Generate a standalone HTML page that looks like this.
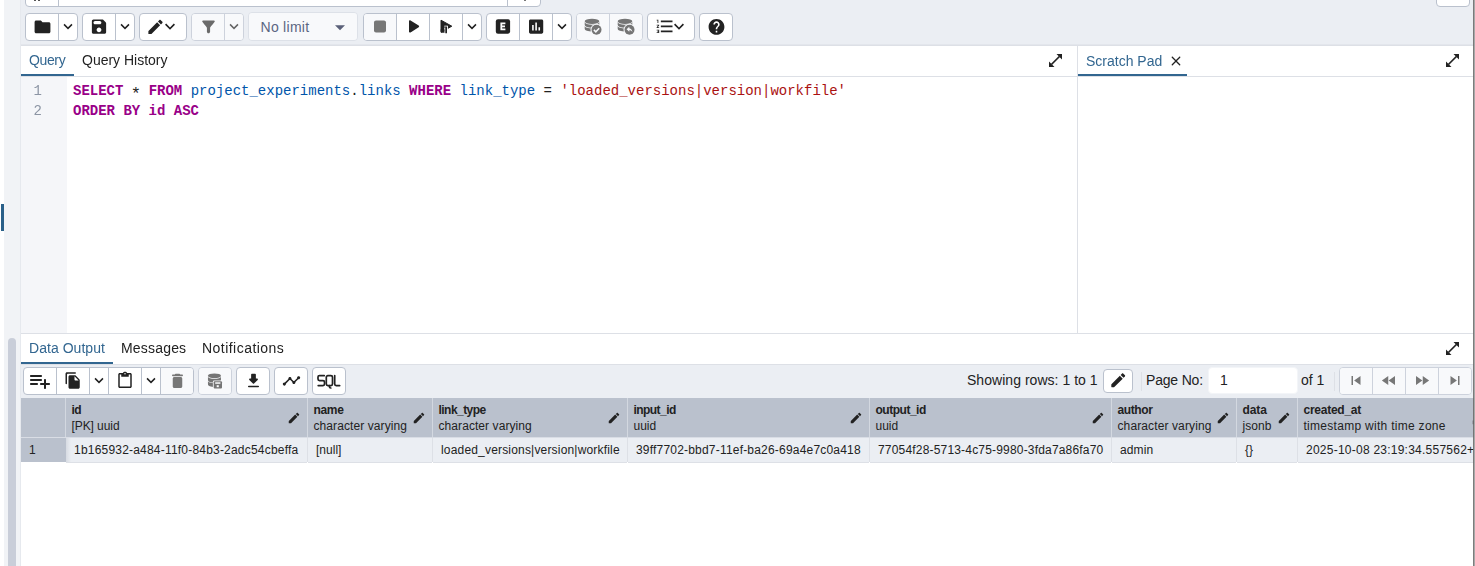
<!DOCTYPE html>
<html><head><meta charset="utf-8">
<style>
*{box-sizing:border-box;margin:0;padding:0}
html,body{width:1475px;height:566px;overflow:hidden;background:#fff;font-family:"Liberation Sans",sans-serif;color:#222}
.abs{position:absolute}
#root{position:relative;width:1475px;height:566px;overflow:hidden;background:#fff}
.t{position:absolute;white-space:nowrap;line-height:1}.g{will-change:transform}
.grp{position:absolute;height:28px;border:1px solid #bac1cd;border-radius:4px;background:#fff;display:flex;overflow:hidden}
.grp>div{min-width:0;height:100%;border-right:1px solid #bac1cd;display:flex;align-items:center;justify-content:center;flex:none}
.grp>div:last-child{border-right:none}
.b{width:33px}.d{width:19px}.grp>div:last-child{flex:1 1 0}.b2{width:100%}
.grp.dis{background:#f8f9fb;border-color:#cdd2dc}.grp.dis>div{border-color:#cdd2dc}
svg{display:block}.grp svg{transform:translateY(-0.600px)}
.code{font-family:"Liberation Mono",monospace;font-size:14px;line-height:20px;white-space:pre;position:absolute;margin-top:1px}
.k{color:#990088;font-weight:bold}.v{color:#0055aa}.s{color:#aa1111}.o{color:#222}
.hc{position:absolute;top:398px;height:39px;background:#bac1cd}
.hn{position:absolute;left:7px;top:5px;font-size:12px;font-weight:bold;white-space:nowrap;line-height:14px}
.ht{position:absolute;left:7px;top:21px;font-size:12px;white-space:nowrap;line-height:14px}
.dc{position:absolute;top:438px;height:25px;background:#ebeef3;font-size:12px;line-height:24px;padding-left:8px;white-space:nowrap;overflow:hidden;border-bottom:1px solid #dde0e6}
#tq{letter-spacing:-0.365px}#tqh{letter-spacing:-0.006px}#tdo{letter-spacing:0.036px}#tms{letter-spacing:0.186px}#tno{letter-spacing:0.464px}#tsr{letter-spacing:0.037px}#tpn{letter-spacing:-0.184px}#tof{letter-spacing:-0.04px}#nolimit{letter-spacing:0.279px}#hn0{letter-spacing:-0.586px}#ht0{letter-spacing:-0.078px}#dv0{letter-spacing:0.203px}#hn1{letter-spacing:-0.34px}#ht1{letter-spacing:0.091px}#dv1{letter-spacing:0.007px}#hn2{letter-spacing:-0.537px}#ht2{letter-spacing:0.074px}#dv2{letter-spacing:0.181px}#hn3{letter-spacing:-0.559px}#ht3{letter-spacing:-0.022px}#dv3{letter-spacing:0.196px}#hn4{letter-spacing:-0.484px}#ht4{letter-spacing:-0.022px}#dv4{letter-spacing:0.182px}#hn5{letter-spacing:-0.391px}#ht5{letter-spacing:0.115px}#dv5{letter-spacing:0.103px}#hn6{letter-spacing:-0.097px}#ht6{letter-spacing:0.062px}#dv6{letter-spacing:0.042px}#hn7{letter-spacing:-0.255px}#ht7{letter-spacing:0.288px}#dv7{letter-spacing:0.242px}</style></head><body><div id="root">
<!-- left strip -->
<div class="abs" style="left:4px;top:0;width:17px;height:566px;background:#f1f3f6"></div>
<div class="abs" style="left:20px;top:0;width:1px;height:566px;background:#e6e9ee"></div>
<div class="abs" style="left:1px;top:204px;width:3px;height:27px;background:#2a6089"></div>
<div class="abs" style="left:8px;top:338px;width:8px;height:240px;border-radius:4px;background:#c9ced9"></div>
<!-- top toolbar bg -->
<div class="abs" style="left:21px;top:0;width:1454px;height:46px;background:#ebeef3;border-bottom:1px solid #dde0e6"></div><div class="abs" style="left:21px;top:44px;width:1454px;height:1px;background:#e3e6ec"></div>
<!-- partial previous row -->
<div class="abs" style="left:25px;top:-22px;width:516px;height:29px;border:1px solid #bac1cd;border-radius:4px;background:#fff"></div>
<div class="abs" style="left:58px;top:0;width:1px;height:6px;background:#bac1cd"></div>
<div class="abs" style="left:507px;top:0;width:1px;height:6px;background:#bac1cd"></div>
<div class="abs" style="left:34px;top:0;width:2px;height:1px;background:#555"></div>
<div class="abs" style="left:38px;top:0;width:2px;height:1px;background:#555"></div>
<div class="abs" style="left:524px;top:0;width:2px;height:1px;background:#777"></div>
<div class="abs" style="left:1436px;top:-22px;width:34px;height:29px;border:1px solid #bac1cd;border-radius:4px;background:#fff"></div>
<!-- TOOLBAR GROUPS -->
<div class="grp" style="left:25px;top:13px;width:53px"><div class="b" style=""><svg width="19" height="19" viewBox="0 0 24 24" style=""><path fill="#222" d="M10.59 4.59C10.21 4.21 9.7 4 9.17 4H4c-1.1 0-1.99.9-1.99 2L2 18c0 1.1.9 2 2 2h16c1.1 0 2-.9 2-2V8c0-1.1-.9-2-2-2h-8l-1.41-1.41z"/></svg></div><div class="d" style=""><svg width="20" height="20" viewBox="0 0 24 24" style=""><path fill="#222" d="M7.41 8.59 12 13.17l4.59-4.58L18 10l-6 6-6-6 1.41-1.41z"/></svg></div></div><div class="grp" style="left:82px;top:13px;width:53px"><div class="b" style=""><svg width="19" height="19" viewBox="0 0 24 24" style="transform:translate(-0.500px,-0.900px)"><path fill="#222" d="M17.59 3.59c-.38-.38-.89-.59-1.42-.59H5c-1.11 0-2 .9-2 2v14c0 1.1.9 2 2 2h14c1.1 0 2-.9 2-2V7.83c0-.53-.21-1.04-.59-1.41l-2.82-2.83zM12 19c-1.66 0-3-1.34-3-3s1.34-3 3-3 3 1.34 3 3-1.34 3-3 3zm1-10H7c-1.1 0-2-.9-2-2s.9-2 2-2h6c1.1 0 2 .9 2 2s-.9 2-2 2z"/></svg></div><div class="d" style=""><svg width="20" height="20" viewBox="0 0 24 24" style=""><path fill="#222" d="M7.41 8.59 12 13.17l4.59-4.58L18 10l-6 6-6-6 1.41-1.41z"/></svg></div></div><div class="grp" style="left:139px;top:13px;width:48px"><div class="b2" style=""><svg width="19" height="19" viewBox="0 0 24 24" style="margin-left:0.400px"><path fill="#222" d="M3 17.46v3.04c0 .28.22.5.5.5h3.04c.13 0 .26-.05.35-.15L17.81 9.94l-3.75-3.75L3.15 17.1c-.1.1-.15.22-.15.36zM20.71 7.04c.39-.39.39-1.02 0-1.41l-2.34-2.34c-.39-.39-1.02-.39-1.41 0l-1.83 1.83 3.75 3.75 1.83-1.83z"/></svg><svg width="20" height="20" viewBox="0 0 24 24" style="margin-left:-4.800px"><path fill="#222" d="M7.41 8.59 12 13.17l4.59-4.58L18 10l-6 6-6-6 1.41-1.41z"/></svg></div></div><div class="grp dis" style="left:191px;top:13px;width:53px"><div class="b" style="background:#f8f9fb"><svg width="19" height="19" viewBox="0 0 24 24" style=""><path fill="#6a6a6a" d="M4.25 5.61C6.57 8.59 10 13 10 13v5c0 1.1.9 2 2 2s2-.9 2-2v-5s3.43-4.41 5.75-7.39c.51-.66.04-1.61-.8-1.61H5.04c-.83 0-1.3.95-.79 1.61z"/></svg></div><div class="d" style="background:#f8f9fb"><svg width="20" height="20" viewBox="0 0 24 24" style=""><path fill="#666" d="M7.41 8.59 12 13.17l4.59-4.58L18 10l-6 6-6-6 1.41-1.41z"/></svg></div></div><div class="grp dis" style="left:248px;top:12px;width:110px;height:29px;border-color:#dde1e8"><div style="width:100%;justify-content:flex-start;background:#f8f9fb"><span id="nolimit" style="font-size:14px;color:#5b6682;margin-left:11.500px;position:relative;top:0px">No limit</span><svg width="24" height="24" viewBox="0 0 24 24" style="margin-left:auto;margin-right:5px;transform:translateY(0.300px)"><path fill="#5b6079" d="M7 10l5 5 5-5z"/></svg></div></div><div class="grp" style="left:363px;top:13px;width:119px"><div class="b" style="background:#f8f9fb"><svg width="24" height="24" viewBox="0 0 24 24" style=""><path fill="#777" d="M8 6h8c1.1 0 2 .9 2 2v8c0 1.1-.9 2-2 2H8c-1.1 0-2-.9-2-2V8c0-1.1.9-2 2-2z"/></svg></div><div class="b" style=""><svg width="24" height="24" viewBox="0 0 24 24" style=""><path fill="#222" d="M8 6.82v10.36c0 .79.87 1.27 1.54.84l8.14-5.18c.62-.39.62-1.29 0-1.69L9.54 5.98C8.87 5.55 8 6.03 8 6.82z"/></svg></div><div class="b" style=""><svg width="20" height="20" viewBox="0 0 20 20"><path fill="#222" stroke="#222" stroke-width="1" stroke-linejoin="round" d="M5 3.800 15.800 9.800 5 15.800z"/><rect x="8.300" y="9.300" width="3.600" height="8" fill="#fff"/><path fill="#222" d="M9.300 10.200h1.700v6.600H9.300z"/><path fill="#222" d="M8.300 10.200h1.200v1.200H8.300z"/><path fill="#222" d="M4.500 13h4v3.300L5 16.400z"/></svg></div><div class="d" style=""><svg width="20" height="20" viewBox="0 0 24 24" style=""><path fill="#222" d="M7.41 8.59 12 13.17l4.59-4.58L18 10l-6 6-6-6 1.41-1.41z"/></svg></div></div><div class="grp" style="left:486px;top:13px;width:86px"><div class="b" style=""><svg width="20" height="20" viewBox="0 0 20 20"><rect x="2.800" y="2.900" width="14.300" height="14.400" rx="2.200" fill="#222"/><path fill="#fff" d="M7.400 6.100h5v1.700H9.200v1.400h2.800v1.600H9.200v1.400h3.200v1.700H7.400z"/></svg></div><div class="b" style=""><svg width="19" height="19" viewBox="0 0 24 24" style="transform:translate(-0.400px,-1px)"><path fill="#222" d="M19 3H5c-1.100 0-2 .9-2 2v14c0 1.100.9 2 2 2h14c1.100 0 2-.9 2-2V5c0-1.100-.9-2-2-2zM9 17H7v-7h2v7zm4 0h-2V7h2v10zm4 0h-2v-4h2v4z"/></svg></div><div class="d" style=""><svg width="20" height="20" viewBox="0 0 24 24" style=""><path fill="#222" d="M7.41 8.59 12 13.17l4.59-4.58L18 10l-6 6-6-6 1.41-1.41z"/></svg></div></div><div class="grp dis" style="left:576px;top:13px;width:67px"><div class="b" style="background:#f8f9fb"><svg width="20" height="20" viewBox="0 0 20 20"><ellipse cx="9.0" cy="4.9" rx="7.3" ry="2.6" fill="#757575"/><path fill="#757575" d="M1.70 5.70A7.3 2.6 0 0 0 16.30 5.70V8.70A7.3 2.6 0 0 1 1.70 8.70z"/><path fill="#757575" d="M1.70 9.50A7.3 2.6 0 0 0 16.30 9.50V12.50A7.3 2.6 0 0 1 1.70 12.50z"/><circle cx="13.500" cy="13.400" r="6" fill="#f8f9fb"/><circle cx="13.500" cy="13.400" r="5" fill="#757575"/><path d="M10.900 13.500l1.900 1.900 3.400-3.600" stroke="#f8f9fb" stroke-width="1.500" fill="none"/></svg></div><div class="b" style="background:#f8f9fb"><svg width="20" height="20" viewBox="0 0 20 20"><ellipse cx="9.0" cy="4.9" rx="7.3" ry="2.6" fill="#757575"/><path fill="#757575" d="M1.70 5.70A7.3 2.6 0 0 0 16.30 5.70V8.70A7.3 2.6 0 0 1 1.70 8.70z"/><path fill="#757575" d="M1.70 9.50A7.3 2.6 0 0 0 16.30 9.50V12.50A7.3 2.6 0 0 1 1.70 12.50z"/><circle cx="13.500" cy="13.400" r="6" fill="#f8f9fb"/><circle cx="13.500" cy="13.400" r="5" fill="#757575"/><path d="M13.300 10.400 10.600 12.900 13.300 15.400V13.900c1.500 0 2.500.5 3.100 1.900-.2-2.100-1.300-3.600-3.100-3.900z" fill="#f8f9fb"/></svg></div></div><div class="grp" style="left:647px;top:13px;width:48px"><div class="b2" style=""><svg width="20" height="20" viewBox="0 0 24 24" style="margin-left:1px"><path fill="#222" d="M2 17h2v.5H3v1h1v.5H2v1h3v-4H2v1zm1-9h1V4H2v1h1v3zm-1 3h1.8L2 13.1v.9h3v-1H3.2L5 10.9V10H2v1zm5-6v2h14V5H7zm0 14h14v-2H7v2zm0-6h14v-2H7v2z"/></svg><svg width="20" height="20" viewBox="0 0 24 24" style="margin-left:-6px"><path fill="#222" d="M7.41 8.59 12 13.17l4.59-4.58L18 10l-6 6-6-6 1.41-1.41z"/></svg></div></div><div class="grp" style="left:699px;top:13px;width:34px"><div class="b" style=""><svg width="19" height="19" viewBox="0 0 24 24" style=""><path fill="#222" d="M12 2C6.48 2 2 6.48 2 12s4.48 10 10 10 10-4.48 10-10S17.52 2 12 2zm1 17h-2v-2h2v2zm2.07-7.75-.9.92C13.45 12.9 13 13.5 13 15h-2v-.5c0-1.1.45-2.1 1.17-2.83l1.24-1.26c.37-.36.59-.86.59-1.41 0-1.1-.9-2-2-2s-2 .9-2 2H8c0-2.21 1.79-4 4-4s4 1.79 4 4c0 .88-.36 1.68-.93 2.25z"/></svg></div></div>
<!-- editor panel -->
<div class="abs" style="left:21px;top:46px;width:1056px;height:31px;background:#fff;border-bottom:1px solid #dde0e6"></div>
<div class="abs" style="left:21px;top:74px;width:53px;height:2px;background:#326690"></div>
<div class="t g" id="tq" style="left:29px;top:53px;font-size:14px;color:#326690">Query</div>
<div class="t g" id="tqh" style="left:82px;top:53px;font-size:14px">Query History</div>
<div class="abs" style="left:21px;top:77px;width:46px;height:256px;background:#f5f6f9"></div>
<div class="code g" style="left:21px;top:80px;width:21px;text-align:right;color:#8c95a4">1
2</div>
<div class="code" id="code" style="left:73px;top:80px"><span class="k">SELECT</span> <span style="display:inline-block;width:8.400px;height:10px;font-size:17px;line-height:0;position:relative;top:4px;left:-1px">*</span> <span class="k">FROM</span> <span class="v">project_experiments</span>.<span class="v">links</span> <span class="k">WHERE</span> <span class="v">link_type</span> = <span class="s">'loaded_versions|version|workfile'</span>
<span class="k">ORDER BY id ASC</span></div>
<!-- splitter vertical -->
<div class="abs" style="left:1077px;top:46px;width:1px;height:288px;background:#dde0e6"></div>
<!-- scratch pad -->
<div class="abs" style="left:1078px;top:46px;width:396px;height:31px;background:#fff;border-bottom:1px solid #dde0e6"></div>
<div class="abs" style="left:1078px;top:74px;width:109px;height:2px;background:#326690"></div>
<div class="t g" id="tsp" style="left:1086px;top:54px;font-size:14px;color:#326690">Scratch Pad</div>
<!-- horizontal splitter -->
<div class="abs" style="left:21px;top:333px;width:1453px;height:1px;background:#dde0e6"></div>
<!-- data output tabs -->
<div class="abs" style="left:21px;top:362px;width:92px;height:2px;background:#326690"></div>
<div class="t g" id="tdo" style="left:29px;top:341px;font-size:14px;color:#326690">Data Output</div>
<div class="t g" id="tms" style="left:121px;top:341px;font-size:14px">Messages</div>
<div class="t g" id="tno" style="left:202px;top:341px;font-size:14px">Notifications</div>
<!-- lower toolbar -->
<div class="abs" style="left:21px;top:364px;width:1453px;height:34px;background:#ebeef3;border-top:1px solid #dde0e6"></div>
<div class="grp" style="left:23px;top:367px;width:171px"><div class="b" style=""><svg width="24" height="24" viewBox="0 0 24 24" style="transform:none"><path fill="#222" d="M13 10H3c-.55 0-1 .45-1 1s.45 1 1 1h10c.55 0 1-.45 1-1s-.45-1-1-1zm0-4H3c-.55 0-1 .45-1 1s.45 1 1 1h10c.55 0 1-.45 1-1s-.45-1-1-1zm5 8v-3c0-.55-.45-1-1-1s-1 .45-1 1v3h-3c-.55 0-1 .45-1 1s.45 1 1 1h3v3c0 .55.45 1 1 1s1-.45 1-1v-3h3c.55 0 1-.45 1-1s-.45-1-1-1h-3zM3 16h6c.55 0 1-.45 1-1s-.45-1-1-1H3c-.55 0-1 .45-1 1s.45 1 1 1z"/></svg></div><div class="b" style=""><svg width="18" height="18" viewBox="0 0 24 24" style=""><path fill="#222" d="M15 1H4c-1.1 0-2 .9-2 2v13c0 .55.45 1 1 1s1-.45 1-1V4c0-.55.45-1 1-1h10c.55 0 1-.45 1-1s-.45-1-1-1zm.59 4.59 4.83 4.83c.37.37.58.88.58 1.41V21c0 1.1-.9 2-2 2H7.99C6.89 23 6 22.100 6 21l.01-14c0-1.1.89-2 1.99-2h6.170c.53 0 1.04.21 1.420.59zM15 12h4.500L14 6.500V11c0 .55.45 1 1 1z"/></svg></div><div class="d" style=""><svg width="20" height="20" viewBox="0 0 24 24" style=""><path fill="#222" d="M7.41 8.59 12 13.17l4.59-4.58L18 10l-6 6-6-6 1.41-1.41z"/></svg></div><div class="b" style=""><svg width="18" height="18" viewBox="0 0 24 24" style=""><path fill="#222" d="M19 2h-4.180C14.400.84 13.300 0 12 0c-1.300 0-2.400.84-2.820 2H5c-1.100 0-2 .9-2 2v16c0 1.100.9 2 2 2h14c1.100 0 2-.9 2-2V4c0-1.100-.9-2-2-2zm-7 0c.55 0 1 .45 1 1s-.45 1-1 1-1-.45-1-1 .45-1 1-1zm7 18H5V4h2v3h10V4h2v16z"/></svg></div><div class="d" style=""><svg width="20" height="20" viewBox="0 0 24 24" style=""><path fill="#222" d="M7.41 8.59 12 13.17l4.59-4.58L18 10l-6 6-6-6 1.41-1.41z"/></svg></div><div class="b" style="background:#f8f9fb"><svg width="19" height="19" viewBox="0 0 24 24" style=""><path fill="#777" d="M6 19c0 1.100.9 2 2 2h8c1.100 0 2-.9 2-2V9c0-1.100-.9-2-2-2H8c-1.100 0-2 .9-2 2v10zM18 4h-2.500l-.71-.71c-.18-.18-.44-.29-.7-.29H9.910c-.26 0-.52.11-.7.29L8.500 4H6c-.55 0-1 .45-1 1s.45 1 1 1h12c.55 0 1-.45 1-1s-.45-1-1-1z"/></svg></div></div><div class="grp dis" style="left:198px;top:367px;width:34px"><div class="b" style="background:#f8f9fb"><svg width="20" height="20" viewBox="0 0 20 20"><ellipse cx="9.45" cy="5.4" rx="6.5" ry="2.4" fill="#757575"/><path fill="#757575" d="M2.95 6.10A6.5 2.4 0 0 0 15.95 6.10V9.80A6.5 2.4 0 0 1 2.95 9.80z"/><path fill="#757575" d="M2.95 10.50A6.5 2.4 0 0 0 15.95 10.50V14.20A6.5 2.4 0 0 1 2.95 14.20z"/><rect x="7.900" y="10.100" width="9.800" height="8.700" rx="1.200" fill="#f8f9fb"/><rect x="8.700" y="10.800" width="8.300" height="7.200" rx="1" fill="#757575"/><rect x="10.200" y="11.900" width="5.200" height="1.500" fill="#f8f9fb"/><rect x="11.700" y="14.800" width="2.100" height="2" fill="#f8f9fb"/></svg></div></div><div class="grp" style="left:236px;top:367px;width:34px"><div class="b" style=""><svg width="19" height="19" viewBox="0 0 24 24" style=""><path fill="#222" d="M16.59 9H15V4c0-.55-.45-1-1-1h-4c-.55 0-1 .45-1 1v5H7.41c-.89 0-1.34 1.08-.71 1.71l4.59 4.59c.39.39 1.02.39 1.41 0l4.59-4.59c.63-.63.19-1.71-.7-1.71zM5 19c0 .55.45 1 1 1h12c.55 0 1-.45 1-1s-.45-1-1-1H6c-.55 0-1 .45-1 1z"/></svg></div></div><div class="grp" style="left:274px;top:367px;width:34px"><div class="b" style=""><svg width="19" height="19" viewBox="0 0 24 24" style=""><path fill="#222" d="M23 8c0 1.1-.9 2-2 2-.18 0-.35-.02-.51-.07l-3.56 3.55c.05.16.07.34.07.52 0 1.1-.9 2-2 2s-2-.9-2-2c0-.18.02-.36.07-.52l-2.55-2.55c-.16.05-.34.07-.52.07s-.36-.02-.52-.07l-4.55 4.56c.05.16.07.33.07.51 0 1.1-.9 2-2 2s-2-.9-2-2 .9-2 2-2c.18 0 .35.02.51.07l4.56-4.55C8.02 9.36 8 9.18 8 9c0-1.1.9-2 2-2s2 .9 2 2c0 .18-.02.36-.07.52l2.55 2.55c.16-.05.34-.07.52-.07s.36.02.52.07l3.55-3.56C19.020 8.35 19 8.18 19 8c0-1.1.9-2 2-2s2 .9 2 2z"/></svg></div></div><div class="grp" style="left:312px;top:367px;width:34px"><div class="b" style=""><svg width="24" height="20" viewBox="0 0 24 20"><g fill="none" stroke="#222" stroke-width="1.700" stroke-linecap="round" stroke-linejoin="round"><path d="M7.300 5.200H2.500Q1 5.200 1 6.700V8.700Q1 10.200 2.500 10.200H6Q7.500 10.200 7.500 11.700V13.700Q7.500 15.200 6 15.200H1.200"/><rect x="9.300" y="5.200" width="6.200" height="10" rx="1.600"/><path d="M12.400 15.200V16.400Q12.400 17.600 13.800 17.600"/><path d="M17.700 5.200V13.700Q17.700 15.200 19.200 15.200H22.700"/></g></svg></div></div><div class="grp dis" style="left:1339px;top:367px;width:133px"><div class="b" style="background:#f8f9fb"><svg width="18" height="18" viewBox="0 0 24 24" style=""><path fill="#777" d="M6 6h2v12H6zm3.500 6 8.500 6V6z"/></svg></div><div class="b" style="background:#f8f9fb"><svg width="18" height="18" viewBox="0 0 24 24" style=""><path fill="#777" d="M11 18V6l-8.500 6 8.500 6zm.5-6 8.500 6V6l-8.500 6z"/></svg></div><div class="b" style="background:#f8f9fb"><svg width="18" height="18" viewBox="0 0 24 24" style=""><path fill="#777" d="M4 18l8.500-6L4 6v12zm9-12v12l8.500-6L13 6z"/></svg></div><div class="b" style="background:#f8f9fb"><svg width="18" height="18" viewBox="0 0 24 24" style=""><path fill="#777" d="M6 18l8.500-6L6 6v12zM16 6v12h2V6h-2z"/></svg></div></div>
<div class="t" id="tsr" style="left:967px;top:373px;font-size:14px">Showing rows: 1 to 1</div>
<div class="abs" style="left:1103px;top:369px;width:30px;height:24px;border:1px solid #bac1cd;border-radius:4px;background:#fff"></div>
<div class="abs" style="left:1141px;top:372px;width:1px;height:19px;background:#dde0e6"></div>
<div class="t" id="tpn" style="left:1146px;top:373px;font-size:14px">Page No:</div>
<div class="abs" style="left:1208px;top:367px;width:89.500px;height:27px;border:1px solid #f3f5f8;border-radius:4px;background:#fff"></div>
<div class="t" style="left:1220px;top:373px;font-size:14px">1</div>
<div class="t" id="tof" style="left:1301px;top:373px;font-size:14px">of 1</div>
<div class="abs" style="left:1334px;top:372px;width:1px;height:19px;background:#dde0e6"></div>
<!-- grid -->
<div class="abs" style="left:21px;top:398px;width:1453px;height:39px;background:#bac1cd"></div><div class="abs" style="left:21px;top:437px;width:1453px;height:1px;background:#d9dde5"></div><div class="abs" style="left:21px;top:438px;width:45px;height:24px;background:#bac1cd"></div><div class="t" style="left:29px;top:444px;font-size:12px">1</div><div class="abs" style="left:65px;top:398px;width:1px;height:39px;background:#d3d8e0"></div><div class="hc" style="left:66px;width:241px;background:none"><div class="hn" id="hn0" style="left:5.500px">id</div><div class="ht" id="ht0" style="left:5.500px">[PK] uuid</div><div class="abs" style="right:6.500px;top:12.500px"><svg width="14" height="14" viewBox="0 0 24 24" style=""><path fill="#222" d="M3 17.46v3.04c0 .28.22.5.5.5h3.04c.13 0 .26-.05.35-.15L17.81 9.94l-3.75-3.75L3.15 17.1c-.1.1-.15.22-.15.36zM20.71 7.04c.39-.39.39-1.02 0-1.41l-2.34-2.34c-.39-.39-1.02-.39-1.41 0l-1.83 1.83 3.75 3.75 1.83-1.83z"/></svg></div></div><div class="dc" style="left:66px;width:241px"><span id="dv0">1b165932-a484-11f0-84b3-2adc54cbeffa</span></div><div class="abs" style="left:307px;top:398px;width:1px;height:39px;background:#d3d8e0"></div><div class="hc" style="left:308px;width:124px;background:none"><div class="hn" id="hn1" style="left:5.500px">name</div><div class="ht" id="ht1" style="left:5.500px">character varying</div><div class="abs" style="right:6.500px;top:12.500px"><svg width="14" height="14" viewBox="0 0 24 24" style=""><path fill="#222" d="M3 17.46v3.04c0 .28.22.5.5.5h3.04c.13 0 .26-.05.35-.15L17.81 9.94l-3.75-3.75L3.15 17.1c-.1.1-.15.22-.15.36zM20.71 7.04c.39-.39.39-1.02 0-1.41l-2.34-2.34c-.39-.39-1.02-.39-1.41 0l-1.83 1.83 3.75 3.75 1.83-1.83z"/></svg></div></div><div class="dc" style="left:308px;width:124px"><span id="dv1">[null]</span></div><div class="abs" style="left:307px;top:438px;width:1px;height:24px;background:#dde0e6"></div><div class="abs" style="left:432px;top:398px;width:1px;height:39px;background:#d3d8e0"></div><div class="hc" style="left:433px;width:194px;background:none"><div class="hn" id="hn2" style="left:5.500px">link_type</div><div class="ht" id="ht2" style="left:5.500px">character varying</div><div class="abs" style="right:6.500px;top:12.500px"><svg width="14" height="14" viewBox="0 0 24 24" style=""><path fill="#222" d="M3 17.46v3.04c0 .28.22.5.5.5h3.04c.13 0 .26-.05.35-.15L17.81 9.94l-3.75-3.75L3.15 17.1c-.1.1-.15.22-.15.36zM20.71 7.04c.39-.39.39-1.02 0-1.41l-2.34-2.34c-.39-.39-1.02-.39-1.41 0l-1.83 1.83 3.75 3.75 1.83-1.83z"/></svg></div></div><div class="dc" style="left:433px;width:194px"><span id="dv2">loaded_versions|version|workfile</span></div><div class="abs" style="left:432px;top:438px;width:1px;height:24px;background:#dde0e6"></div><div class="abs" style="left:627px;top:398px;width:1px;height:39px;background:#d3d8e0"></div><div class="hc" style="left:628px;width:241px;background:none"><div class="hn" id="hn3" style="left:5.500px">input_id</div><div class="ht" id="ht3" style="left:5.500px">uuid</div><div class="abs" style="right:6.500px;top:12.500px"><svg width="14" height="14" viewBox="0 0 24 24" style=""><path fill="#222" d="M3 17.46v3.04c0 .28.22.5.5.5h3.04c.13 0 .26-.05.35-.15L17.81 9.94l-3.75-3.75L3.15 17.1c-.1.1-.15.22-.15.36zM20.71 7.04c.39-.39.39-1.02 0-1.41l-2.34-2.34c-.39-.39-1.02-.39-1.41 0l-1.83 1.83 3.75 3.75 1.83-1.83z"/></svg></div></div><div class="dc" style="left:628px;width:241px"><span id="dv3">39ff7702-bbd7-11ef-ba26-69a4e7c0a418</span></div><div class="abs" style="left:627px;top:438px;width:1px;height:24px;background:#dde0e6"></div><div class="abs" style="left:869px;top:398px;width:1px;height:39px;background:#d3d8e0"></div><div class="hc" style="left:870px;width:241px;background:none"><div class="hn" id="hn4" style="left:5.500px">output_id</div><div class="ht" id="ht4" style="left:5.500px">uuid</div><div class="abs" style="right:6.500px;top:12.500px"><svg width="14" height="14" viewBox="0 0 24 24" style=""><path fill="#222" d="M3 17.46v3.04c0 .28.22.5.5.5h3.04c.13 0 .26-.05.35-.15L17.81 9.94l-3.75-3.75L3.15 17.1c-.1.1-.15.22-.15.36zM20.71 7.04c.39-.39.39-1.02 0-1.41l-2.34-2.34c-.39-.39-1.02-.39-1.41 0l-1.83 1.83 3.75 3.75 1.83-1.83z"/></svg></div></div><div class="dc" style="left:870px;width:241px"><span id="dv4">77054f28-5713-4c75-9980-3fda7a86fa70</span></div><div class="abs" style="left:869px;top:438px;width:1px;height:24px;background:#dde0e6"></div><div class="abs" style="left:1111px;top:398px;width:1px;height:39px;background:#d3d8e0"></div><div class="hc" style="left:1112px;width:124px;background:none"><div class="hn" id="hn5" style="left:5.500px">author</div><div class="ht" id="ht5" style="left:5.500px">character varying</div><div class="abs" style="right:6.500px;top:12.500px"><svg width="14" height="14" viewBox="0 0 24 24" style=""><path fill="#222" d="M3 17.46v3.04c0 .28.22.5.5.5h3.04c.13 0 .26-.05.35-.15L17.81 9.94l-3.75-3.75L3.15 17.1c-.1.1-.15.22-.15.36zM20.71 7.04c.39-.39.39-1.02 0-1.41l-2.34-2.34c-.39-.39-1.02-.39-1.41 0l-1.83 1.83 3.75 3.75 1.83-1.83z"/></svg></div></div><div class="dc" style="left:1112px;width:124px"><span id="dv5">admin</span></div><div class="abs" style="left:1111px;top:438px;width:1px;height:24px;background:#dde0e6"></div><div class="abs" style="left:1236px;top:398px;width:1px;height:39px;background:#d3d8e0"></div><div class="hc" style="left:1237px;width:60px;background:none"><div class="hn" id="hn6" style="left:5.500px">data</div><div class="ht" id="ht6" style="left:5.500px">jsonb</div><div class="abs" style="right:6.500px;top:12.500px"><svg width="14" height="14" viewBox="0 0 24 24" style=""><path fill="#222" d="M3 17.46v3.04c0 .28.22.5.5.5h3.04c.13 0 .26-.05.35-.15L17.81 9.94l-3.75-3.75L3.15 17.1c-.1.1-.15.22-.15.36zM20.71 7.04c.39-.39.39-1.02 0-1.41l-2.34-2.34c-.39-.39-1.02-.39-1.41 0l-1.83 1.83 3.75 3.75 1.83-1.83z"/></svg></div></div><div class="dc" style="left:1237px;width:60px"><span id="dv6">{}</span></div><div class="abs" style="left:1236px;top:438px;width:1px;height:24px;background:#dde0e6"></div><div class="abs" style="left:1297px;top:398px;width:1px;height:39px;background:#d3d8e0"></div><div class="hc" style="left:1298px;width:176px;background:none"><div class="hn" id="hn7" style="left:5.500px">created_at</div><div class="ht" id="ht7" style="left:5.500px">timestamp with time zone</div></div><div class="dc" style="left:1298px;width:176px"><span id="dv7">2025-10-08 23:19:34.557562+00</span></div><div class="abs" style="left:1297px;top:438px;width:1px;height:24px;background:#dde0e6"></div><div class="abs" style="left:66px;top:438px;width:5px;height:24px;background:linear-gradient(90deg,rgba(110,120,140,0.160),rgba(110,120,140,0))"></div>
<div class="abs" style="left:1048px;top:53px"><svg width="14" height="14" viewBox="0 0 14 14" style="transform:translate(0.500px,0.400px)"><path d="M3 11 11 3" stroke="#222" stroke-width="1.500"/><path fill="#222" d="M8 .500H13.500V6zM.500 8V13.500H6z"/></svg></div><div class="abs" style="left:1445px;top:53px"><svg width="14" height="14" viewBox="0 0 14 14" style="transform:translate(0.500px,0.400px)"><path d="M3 11 11 3" stroke="#222" stroke-width="1.500"/><path fill="#222" d="M8 .500H13.500V6zM.500 8V13.500H6z"/></svg></div><div class="abs" style="left:1445px;top:341px"><svg width="14" height="14" viewBox="0 0 14 14" style="transform:translate(0.500px,0.400px)"><path d="M3 11 11 3" stroke="#222" stroke-width="1.500"/><path fill="#222" d="M8 .500H13.500V6zM.500 8V13.500H6z"/></svg></div><div class="abs" style="left:1168px;top:53px"><svg width="16" height="16" viewBox="0 0 24 24" style=""><path fill="#222" d="M18.3 5.710c-.39-.39-1.020-.39-1.410 0L12 10.590 7.110 5.700c-.39-.39-1.020-.39-1.410 0-.39.39-.39 1.020 0 1.410L10.590 12 5.700 16.890c-.39.39-.39 1.020 0 1.410.39.39 1.020.39 1.410 0L12 13.410l4.890 4.890c.39.39 1.020.39 1.410 0 .39-.39.39-1.020 0-1.410L13.410 12l4.890-4.890c.38-.38.38-1.020 0-1.400z"/></svg></div><div class="abs" style="left:1109px;top:371.300px"><svg width="18.5" height="18.5" viewBox="0 0 24 24" style=""><path fill="#222" d="M3 17.46v3.04c0 .28.22.5.5.5h3.04c.13 0 .26-.05.35-.15L17.81 9.94l-3.75-3.75L3.15 17.1c-.1.1-.15.22-.15.36zM20.71 7.04c.39-.39.39-1.02 0-1.41l-2.34-2.34c-.39-.39-1.02-.39-1.41 0l-1.83 1.83 3.75 3.75 1.83-1.83z"/></svg></div>
<!-- right dark edge -->
<svg class="abs" style="left:1465px;top:0" width="10" height="566" viewBox="0 0 10 566"><rect x="8.300" y="0" width="1.700" height="566" fill="#fff"/><rect x="8.400" y="0" width="1" height="566" fill="#262626"/><rect x="7.600" y="420.500" width="0.900" height="3.700" fill="#555" opacity="0.700"/></svg>
</div></body></html>
